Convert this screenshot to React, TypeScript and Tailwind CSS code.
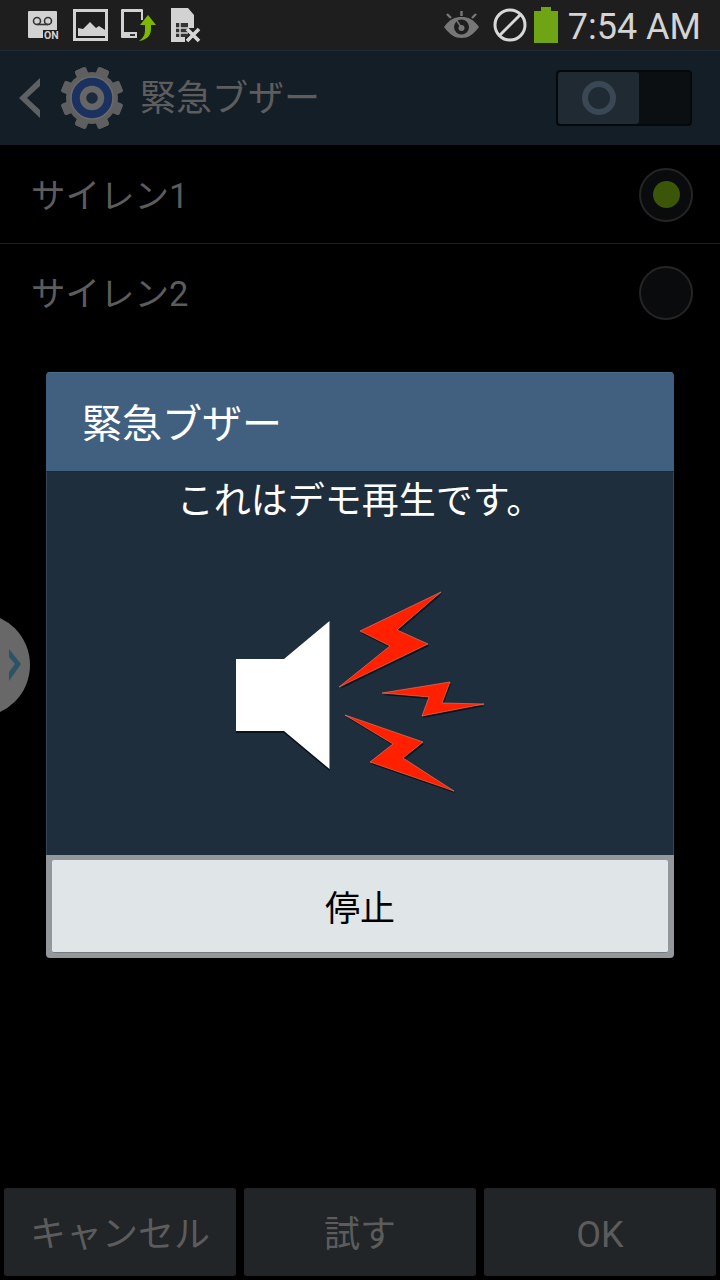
import React from "react";

const JP = { fontFamily: '"Roboto","Noto Sans CJK JP",sans-serif' } as const;

function StatusLeft() {
  return (
    <div className="flex items-center">
      <svg width="32" height="30" viewBox="0 0 32 30" className="ml-[28px] mt-[1px]">
        <path d="M1 0h27a1 1 0 0 1 1 1v18H15v8H1a1 1 0 0 1-1-1V1a1 1 0 0 1 1-1z" fill="#d2d2d2" />
        <circle cx="9" cy="10" r="3.500" fill="none" stroke="#333" strokeWidth="1.600" />
        <circle cx="20" cy="10" r="3.500" fill="none" stroke="#333" strokeWidth="1.600" />
        <path d="M9 13.500h11" stroke="#333" strokeWidth="1.600" />
        <text x="16" y="28" fontSize="10.500" fontWeight="700" fill="#d2d2d2" fontFamily="Roboto">ON</text>
      </svg>
      <svg width="36" height="33" viewBox="0 0 36 33" className="ml-[13px]">
        <rect x="1.500" y="1.500" width="32" height="29" fill="none" stroke="#d2d2d2" strokeWidth="3" />
        <path d="M5 27V19l5 1 7-7 6 6 3-2 6 4v6z" fill="#d2d2d2" />
      </svg>
      <svg width="36" height="34" viewBox="0 0 36 34" className="ml-[12px]">
        <path d="M1 1h20a1 1 0 0 1 1 1v10h-2V4H3v20h13v6H1a1 1 0 0 1-1-1V2a1 1 0 0 1 1-1z" fill="#d2d2d2" />
        <rect x="9" y="26" width="5" height="2" fill="#333" />
        <path d="M27 7l8 10h-5v4c0 6-4 11-12 12 4-3 6-6 6-11v-5h-5z" fill="#7cb800" />
      </svg>
      <svg width="30" height="35" viewBox="0 0 30 35" className="ml-[14px]">
        <path d="M0 0h17l6 7v13h-9v14H0z" fill="#d2d2d2" />
        <path d="M5 15h12v14H5z" fill="#333" />
        <path d="M9 15v14M5 20h12M5 25h12" stroke="#d2d2d2" strokeWidth="1.500" />
        <path d="M16 21l12 12M28 21L16 33" stroke="#d8d8d8" strokeWidth="3.600" />
      </svg>
    </div>
  );
}

function StatusRight() {
  return (
    <div className="flex items-center mr-[19px]">
      <svg width="37" height="30" viewBox="0 0 37 30" className="mt-[-1px]">
        <path d="M1 17C7 9 12 7 18.500 7S30 9 36 17c-6 8-11 11-17.500 11S7 25 1 17z" fill="#777" />
        <circle cx="18.500" cy="17" r="7.500" fill="#1e1e1e" />
        <circle cx="18.500" cy="18" r="3" fill="#777" />
        <path d="M14 11l4 6" stroke="#777" strokeWidth="1.500" />
        <path d="M18.500 1v5M4 4l4 4M33 4l-4 4" stroke="#777" strokeWidth="2.400" />
      </svg>
      <svg width="34" height="34" viewBox="0 0 34 34" className="ml-[13px]">
        <circle cx="17" cy="17" r="15" fill="none" stroke="#d8d8d8" strokeWidth="3" />
        <path d="M7 27L27 7" stroke="#d8d8d8" strokeWidth="3" />
      </svg>
      <svg width="24" height="36" viewBox="0 0 24 36" className="ml-[7px]">
        <path d="M7 0h10v4h7v32H0V4h7z" fill="#6fa515" />
      </svg>
      <span className="ml-[10px] mt-[4px] text-[36px] leading-none text-[#d4d4d4] font-['Roboto']">7:54 AM</span>
    </div>
  );
}

function Gear() {
  return (
    <svg width="64" height="64" viewBox="0 0 64 64" className="ml-[19px]">
      <g fill="#5f5f5f">
        {[0, 45, 90, 135, 180, 225, 270, 315].map((a) => (
          <rect key={a} x="26" y="0.500" width="12" height="63" rx="2" transform={`rotate(${a + 22.5} 32 32)`} />
        ))}
        <circle cx="32" cy="32" r="26" />
      </g>
      <circle cx="32" cy="32" r="21" fill="#1b3260" />
      <circle cx="32" cy="32" r="21" fill="none" stroke="#6a6a6a" strokeWidth="1.500" />
      <circle cx="32" cy="32" r="9" fill="#1d2a3b" stroke="#666666" strokeWidth="6.500" />
    </svg>
  );
}

function ToggleSwitch() {
  return (
    <div className="mr-[28px] w-[136px] h-[56px] rounded-[4px] bg-[#0c0f11] border-2 border-[#070809] flex">
      <div className="w-[81px] h-[52px] rounded-[3px] bg-[#202a33] flex items-center justify-center">
        <div className="w-[34px] h-[34px] rounded-full border-[6px] border-[#3a4754]" />
      </div>
    </div>
  );
}

function ListRow({ label, selected, divider }: { label: string; selected?: boolean; divider?: boolean }) {
  return (
    <div className={`h-[98px] flex items-center justify-between pl-[31px] pr-[27px] ${divider ? "border-b border-[#1c1c1c]" : ""}`}>
      <span className="pt-[3px] text-[34.500px] leading-none text-[#5c5c5c]">{label}</span>
      <div className="w-[54px] h-[54px] rounded-full border-2 border-[#252525] bg-[#0a0b0d] flex items-center justify-center">
        {selected && <div className="w-[27px] h-[27px] rounded-full bg-[#3b5509]" />}
      </div>
    </div>
  );
}

function BottomButton({ label }: { label: string }) {
  return (
    <div className="flex-1 h-[88px] rounded-[3px] bg-[#212527] flex items-center justify-center pt-[5px] text-[36px] leading-none text-[#5c5c5c]">
      {label}
    </div>
  );
}

const B1 = "M231 12L150 51 180 66 129 107 218 64 187 50z";
const B2 = "M172 113L240 102 232 123 274 124 212 136 219 117z";
const B3 = "M135 135L213 162 193 178 244 211 160 182 183 164z";

function Bolts() {
  return (
    <svg width="290" height="230" viewBox="0 0 290 230" className="absolute left-[163px] top-[108px]">
      <path d="M26 80H74L119.500 41V191L74 153H26z" fill="#0c141b" />
      <path d="M26 79H74L119.500 41V189L74 151H26z" fill="#fff" />
      <g fill="#0b1219" transform="translate(1 2)">
        <path d={B1} />
        <path d={B2} />
        <path d={B3} />
      </g>
      <g fill="#ff2000" stroke="#f4806a" strokeWidth="0.600">
        <path d={B1} />
        <path d={B2} />
        <path d={B3} />
      </g>
    </svg>
  );
}

function Dialog() {
  return (
    <div className="absolute left-[46px] top-[372px] w-[628px] h-[586px] rounded-[4px] overflow-hidden flex flex-col">
      <div className="h-[100px] shrink-0 bg-[#41607f] border-t border-[#4f6e8c] border-b border-b-[#1b2a38] flex items-center pl-[36px] pt-[5px] text-[40px] leading-none text-white">
        緊急ブザー
      </div>
      <div className="relative flex-1 bg-[#1e2e3d] border-x border-[#33465a] flex flex-col items-center pt-[8px] text-[37px] leading-[44px] text-white">
        これはデモ再生です。
        <Bolts />
      </div>
      <div className="h-[103px] shrink-0 bg-[#92989c] px-[6px] pt-[5px] pb-[5px]">
        <div className="h-full rounded-[2px] bg-[#e0e5e8] border-b border-[#777b7f] flex items-center justify-center pt-[7px] text-[35px] leading-none text-black">
          停止
        </div>
      </div>
    </div>
  );
}

export default function App() {
  return (
    <div style={JP} className="relative w-[720px] h-[1280px] bg-black overflow-hidden flex flex-col">
      <div className="h-[50px] shrink-0 bg-[#1e1e1e] flex items-center justify-between">
        <StatusLeft />
        <StatusRight />
      </div>
      <div className="h-[95px] shrink-0 bg-[#141e27] border-t border-[#1c2c38] flex items-center justify-between">
        <div className="flex items-center">
          <svg width="22" height="40" viewBox="0 0 22 40" className="ml-[19px]">
            <path d="M21 0v8L8 20l13 12v8L0 20z" fill="#5f6061" />
          </svg>
          <Gear />
          <span className="ml-[16px] pt-[2px] text-[36px] leading-none text-[#5d5d5d]">緊急ブザー</span>
        </div>
        <ToggleSwitch />
      </div>
      <div className="h-[1px] shrink-0 bg-black" />
      <ListRow label="サイレン1" selected divider />
      <ListRow label="サイレン2" />
      <div className="flex-1" />
      <div className="h-[92px] shrink-0 flex gap-[8px] px-[4px] pb-[4px]">
        <BottomButton label="キャンセル" />
        <BottomButton label="試す" />
        <BottomButton label="OK" />
      </div>
      <Dialog />
      <div className="absolute left-[-74px] top-[613px] w-[104px] h-[104px] rounded-full bg-[#686868] flex items-center justify-end pr-[9px]">
        <svg width="12" height="32" viewBox="0 0 12 32">
          <path d="M0 0l12 15L0 32v-9l6-8-6-7z" fill="#2a5366" />
        </svg>
      </div>
    </div>
  );
}
